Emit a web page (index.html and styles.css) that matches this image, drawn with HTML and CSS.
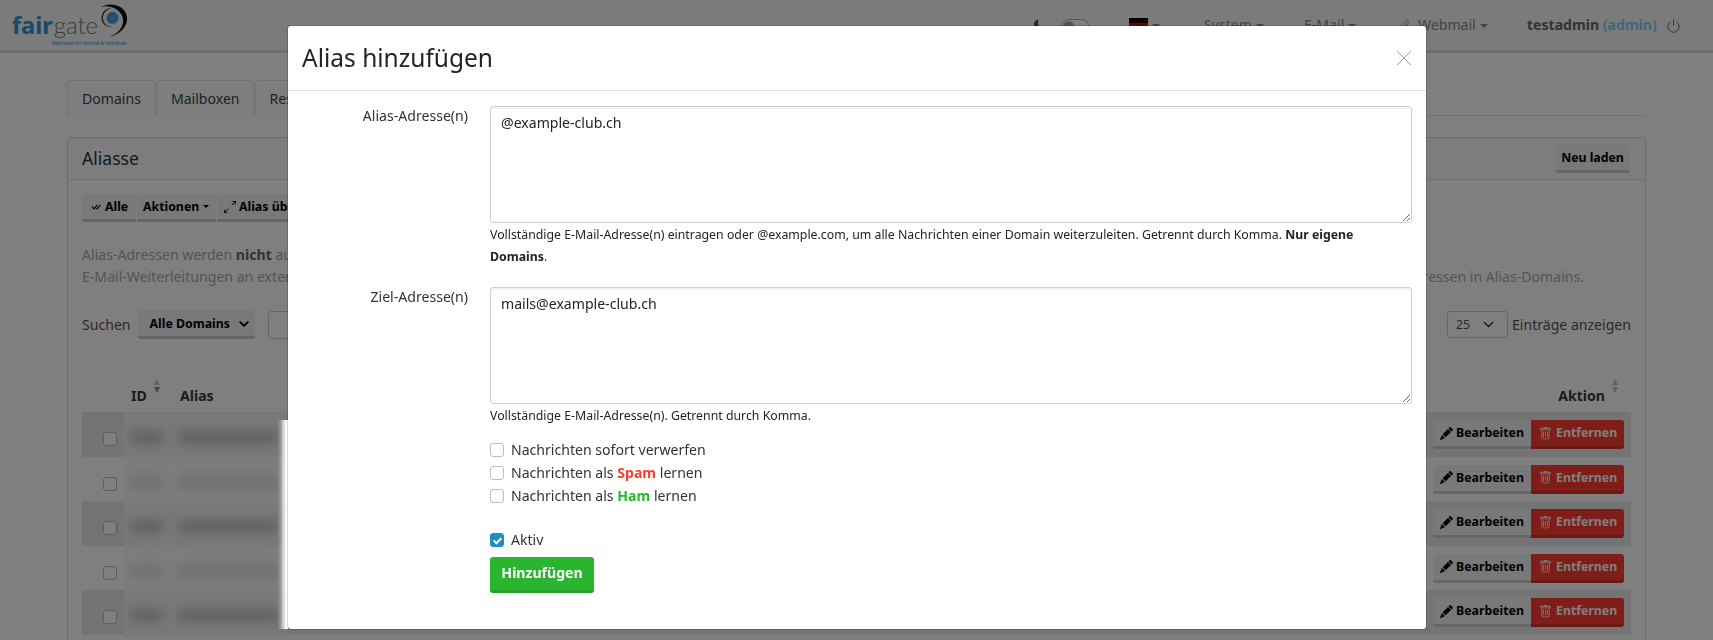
FILE: index.html
```html
<!DOCTYPE html>
<html lang="de">
<head>
<meta charset="utf-8">
<title>Aliasse</title>
<link rel="stylesheet" href="styles.css">
</head>
<body>
<svg class="defs" aria-hidden="true">
  <symbol id="i-pencil" viewBox="0 0 16 16"><path d="M12.854.146a.5.5 0 0 0-.707 0L10.5 1.793 14.207 5.5l1.647-1.646a.5.5 0 0 0 0-.708l-3-3zm.646 6.061L9.793 2.5 3.293 9H3.5a.5.5 0 0 1 .5.5v.5h.5a.5.5 0 0 1 .5.5v.5h.5a.5.5 0 0 1 .5.5v.5h.5a.5.5 0 0 1 .5.5v.207l6.5-6.5zm-7.468 7.468A.5.5 0 0 1 6 13.5V13h-.5a.5.5 0 0 1-.5-.5V12h-.5a.5.5 0 0 1-.5-.5V11h-.5a.5.5 0 0 1-.5-.5V10h-.5a.499.499 0 0 1-.175-.032l-.179.178a.5.5 0 0 0-.11.168l-2 5a.5.5 0 0 0 .65.65l5-2a.5.5 0 0 0 .168-.11l.178-.178z"/></symbol>
  <symbol id="i-trash" viewBox="0 0 16 16"><path d="M5.5 5.5A.5.5 0 0 1 6 6v6a.5.5 0 0 1-1 0V6a.5.5 0 0 1 .5-.5zm2.5 0a.5.5 0 0 1 .5.5v6a.5.5 0 0 1-1 0V6a.5.5 0 0 1 .5-.5zm3 .5a.5.5 0 0 0-1 0v6a.5.5 0 0 0 1 0V6z"/><path fill-rule="evenodd" d="M14.5 3a1 1 0 0 1-1 1H13v9a2 2 0 0 1-2 2H5a2 2 0 0 1-2-2V4h-.5a1 1 0 0 1-1-1V2a1 1 0 0 1 1-1H6a1 1 0 0 1 1-1h2a1 1 0 0 1 1 1h3.5a1 1 0 0 1 1 1v1zM4.118 4 4 4.059V13a1 1 0 0 0 1 1h6a1 1 0 0 0 1-1V4.059L11.882 4H4.118zM2.5 3V2h11v1h-11z"/></symbol>
  <symbol id="i-chev" viewBox="0 0 16 16"><path fill="none" stroke="currentColor" stroke-linecap="round" stroke-linejoin="round" d="M2 5l6 6 6-6"/></symbol>
</svg>

<div class="page">
  <header class="nav">
    <div class="logo">
      <div class="logo-word"><span class="logo-fair">fair</span><span class="logo-gate">gate</span></div>
      <div class="logo-tag">Mehrwert für Vereine &amp; Verbände</div>
      <svg class="logo-swirl" viewBox="0 0 34 34">
        <defs><radialGradient id="orb"><stop offset="0" stop-color="#5fb4ea"/><stop offset="0.7" stop-color="#3a90d2"/><stop offset="1" stop-color="#b6d8ee"/></radialGradient></defs>
        <circle cx="16.500" cy="14" r="9" fill="#f2f6f8"/>
        <circle cx="16.500" cy="14" r="6.500" fill="url(#orb)"/>
        <path d="M5.500 15C5 8 10 3.500 17 4 11.500 4.500 7 8.500 7 14c0 5 4 8.500 9.500 8.800C10.500 23.500 6 20 5.500 15z" fill="#444"/>
        <path d="M5 3C13-2 29 0 31 13c1 10-8 18-18 20 9-3 15-10 14-18C26 6 14 0 5 3z" fill="#111"/>
      </svg>
    </div>
    <div class="nav-right">
      <svg class="moon" viewBox="0 0 16 16"><path d="M6 .3a7.2 7.2 0 0 0 2 14.9c2.500 0 4.700-1.300 6-3.200-4.500.7-8.700-2.500-8.700-7 0-1.800.3-3.400.7-4.700z"/></svg>
      <span class="toggle"><span class="toggle-knob"></span></span>
      <span class="flag"><span class="fl-b"></span><span class="fl-r"></span><span class="fl-y"></span></span>
      <span class="caret caret-flag"></span>
      <span class="nav-item nav-system">System<span class="caret"></span></span>
      <span class="nav-item nav-email">E-Mail<span class="caret"></span></span>
      <svg class="clip" viewBox="0 0 16 16"><path d="M13 6l-6.500 6.500a2.300 2.300 0 0 1-3.300-3.300L10 2.500a1.600 1.600 0 0 1 2.300 2.200L6 11" fill="none" stroke="currentColor" stroke-width="1"/></svg>
      <span class="nav-item nav-webmail">Webmail<span class="caret"></span></span>
      <span class="nav-user">testadmin <span class="nav-role">(admin)</span></span>
      <svg class="power" viewBox="0 0 16 16"><path d="M5 3.500a6 6 0 1 0 6 0M8 1v7" fill="none" stroke="currentColor" stroke-width="1"/></svg>
    </div>
  </header>

  <main class="content">
    <nav class="tabs">
      <span class="tab">Domains</span>
      <span class="tab">Mailboxen</span>
      <span class="tab">Ressourcen</span>
    </nav>
    <section class="panel">
      <div class="panel-head">
        <h2 class="panel-title">Aliasse</h2>
        <button class="btn btn-reload">Neu laden</button>
      </div>
      <div class="panel-body">
        <div class="btn-group">
          <button class="btn btn-joined btn-all"><svg class="ic-12" viewBox="0 0 16 16"><path d="M8.970 4.970a.75.75 0 0 1 1.070 1.050l-3.990 4.990a.75.75 0 0 1-1.080.020L2.324 8.384a.75.75 0 1 1 1.060-1.060l2.094 2.093L8.950 4.992a.252.252 0 0 1 .020-.022zm-.92 5.140.92.920a.75.75 0 0 0 1.079-.020l3.992-4.990a.75.75 0 1 0-1.091-1.028L9.477 9.417l-.485-.486-.943 1.179z"/></svg> Alle</button>
          <button class="btn btn-joined btn-actions">Aktionen<span class="caret caret-dark"></span></button>
          <button class="btn btn-joined btn-take"><svg class="ic-12" viewBox="0 0 16 16"><path d="M5.828 10.172a.5.5 0 0 0-.707 0l-4.096 4.096V11.500a.5.5 0 0 0-1 0v3.975a.5.5 0 0 0 .5.5H4.500a.5.5 0 0 0 0-1H1.732l4.096-4.096a.5.5 0 0 0 0-.707zm4.344-4.344a.5.5 0 0 0 .707 0l4.096-4.096V4.500a.5.5 0 1 0 1 0V.525a.5.5 0 0 0-.5-.5H11.500a.5.5 0 0 0 0 1h2.768l-4.096 4.096a.5.5 0 0 0 0 .707z"/></svg> Alias übernehmen</button>
        </div>
        <div class="note">
          <p class="note-line"><span>Alias-Adressen werden <b>nicht</b> automatisch angelegt</span></p>
          <p class="note-line"><span>E-Mail-Weiterleitungen an externe Adressen</span><span>Adressen in Alias-Domains.</span></p>
        </div>
        <div class="filters">
          <div class="filters-left">
            <span>Suchen</span>
            <span class="select-btn">Alle Domains<svg class="chev" viewBox="0 0 16 16"><use href="#i-chev"/></svg></span>
            <span class="search-box"></span>
          </div>
          <div class="filters-right">
            <span class="select-plain">25<svg class="chev" viewBox="0 0 16 16"><use href="#i-chev"/></svg></span>
            <span>Einträge anzeigen</span>
          </div>
        </div>
        <div class="thead">
          <span class="th th-id">ID<span class="sort"><i class="up"></i><i class="down"></i></span></span>
          <span class="th th-alias">Alias</span>
          <span class="th th-action">Aktion<span class="sort sort-faint"><i class="up"></i><i class="down"></i></span></span>
        </div>
        <div class="rows">
          <div class="row row-odd"><input class="cb" type="checkbox"><div class="row-actions"><button class="btn btn-edit"><svg class="ic-13"><use href="#i-pencil"/></svg>Bearbeiten</button><button class="btn btn-del"><svg class="ic-13"><use href="#i-trash"/></svg>Entfernen</button></div></div>
          <div class="row"><input class="cb" type="checkbox"><div class="row-actions"><button class="btn btn-edit"><svg class="ic-13"><use href="#i-pencil"/></svg>Bearbeiten</button><button class="btn btn-del"><svg class="ic-13"><use href="#i-trash"/></svg>Entfernen</button></div></div>
          <div class="row row-odd"><input class="cb" type="checkbox"><div class="row-actions"><button class="btn btn-edit"><svg class="ic-13"><use href="#i-pencil"/></svg>Bearbeiten</button><button class="btn btn-del"><svg class="ic-13"><use href="#i-trash"/></svg>Entfernen</button></div></div>
          <div class="row"><input class="cb" type="checkbox"><div class="row-actions"><button class="btn btn-edit"><svg class="ic-13"><use href="#i-pencil"/></svg>Bearbeiten</button><button class="btn btn-del"><svg class="ic-13"><use href="#i-trash"/></svg>Entfernen</button></div></div>
          <div class="row row-odd"><input class="cb" type="checkbox"><div class="row-actions"><button class="btn btn-edit"><svg class="ic-13"><use href="#i-pencil"/></svg>Bearbeiten</button><button class="btn btn-del"><svg class="ic-13"><use href="#i-trash"/></svg>Entfernen</button></div></div>
        </div>
      </div>
    </section>
  </main>
</div>

<div class="backdrop"></div>

<div class="redact" aria-hidden="true">
  <div class="r-row r-dark"><i class="r-id"></i><i class="r-alias"></i></div>
  <div class="r-row"><i class="r-id"></i><i class="r-alias"></i></div>
  <div class="r-row r-dark"><i class="r-id"></i><i class="r-alias"></i></div>
  <div class="r-row"><i class="r-id"></i><i class="r-alias"></i></div>
  <div class="r-row r-dark"><i class="r-id"></i><i class="r-alias"></i></div>
</div>

<div class="modal">
  <div class="modal-head">
    <h1 class="modal-title">Alias hinzufügen</h1>
    <svg class="modal-close" viewBox="0 0 16 16"><path d="M1 1l14 14M15 1L1 15" stroke="currentColor" stroke-width="1" fill="none"/></svg>
  </div>
  <form class="modal-body">
    <div class="field">
      <label class="field-label">Alias-Adresse(n)</label>
      <div>
        <textarea class="area">@example-club.ch</textarea>
        <p class="help">Vollständige E-Mail-Adresse(n) eintragen oder @example.com, um alle Nachrichten einer Domain weiterzuleiten. Getrennt durch Komma. <b>Nur eigene</b> <b>Domains</b>.</p>
      </div>
    </div>
    <div class="field field-second">
      <label class="field-label">Ziel-Adresse(n)</label>
      <div>
        <textarea class="area">mails@example-club.ch</textarea>
        <p class="help">Vollständige E-Mail-Adresse(n). Getrennt durch Komma.</p>
      </div>
    </div>
    <div class="field">
      <span></span>
      <div>
        <div class="checks">
          <label class="check"><input class="cb" type="checkbox">Nachrichten sofort verwerfen</label>
          <label class="check"><input class="cb" type="checkbox">Nachrichten als&nbsp;<b class="spam">Spam</b>&nbsp;lernen</label>
          <label class="check"><input class="cb" type="checkbox">Nachrichten als&nbsp;<b class="ham">Ham</b>&nbsp;lernen</label>
        </div>
        <label class="check check-active"><input class="cb" type="checkbox" checked>Aktiv</label>
        <button class="btn-add" type="button">Hinzufügen</button>
      </div>
    </div>
  </form>
</div>
</body>
</html>
```
FILE: styles.css
```css
* { box-sizing: border-box; }
html, body { margin: 0; height: 640px; overflow: hidden; }
body { font-family: "Noto Sans", sans-serif; font-size: 14.080px; line-height: 22px; color: #212529; background: #fff; }
p, h1, h2 { margin: 0; font-weight: 400; }
.defs { position: absolute; width: 0; height: 0; }
.page { height: 640px; overflow: hidden; }

/* top bar */
.nav { height: 53px; background: #f6f6f6; border-bottom: 3px solid #dcdcdc; display: flex; justify-content: space-between; }
.logo { position: relative; width: 140px; padding: 11px 0 0 12px; }
.logo-word { font-size: 24px; line-height: 28px; font-family: "Lato", sans-serif; white-space: nowrap; }
.logo-fair { font-family: "Noto Sans", sans-serif; font-weight: 700; color: #2a98d0; font-size: 23.500px; }
.logo-gate { color: #777; font-weight: 300; margin-left: 1px; }
.logo-tag { position: absolute; left: 52px; top: 40px; font-size: 4.700px; line-height: 6px; color: #2a98d0; white-space: nowrap; }
.logo-swirl { position: absolute; left: 96px; top: 4px; width: 34px; height: 34px; }
.nav-right { position: relative; flex: 1; display: flex; align-items: center; color: #888; }
.moon { position: absolute; left: 894px; top: 17px; width: 12px; height: 16px; fill: #555; }
.toggle { position: absolute; left: 921px; top: 19px; width: 28px; height: 15px; border: 1px solid #aaa; border-radius: 8px; background: #fff; }
.toggle-knob { display: block; width: 11px; height: 11px; margin: 1px; border-radius: 50%; background: #aaa; }
.flag { position: absolute; left: 989px; top: 18px; width: 19px; height: 15px; display: flex; flex-direction: column; }
.flag span { flex: 1; }
.fl-b { background: #000; } .fl-r { background: #d00; } .fl-y { background: #fc0; }
.caret { display: inline-block; width: 0; height: 0; margin-left: 4px; vertical-align: 2px; border: 4px solid transparent; border-top-color: currentColor; border-bottom-width: 0; }
.caret-flag { position: absolute; left: 1012px; top: 24px; margin: 0; }
.caret-dark { border-width: 3px 3px 0; vertical-align: 2px; }
.nav-item, .nav-user { position: absolute; top: 14px; white-space: nowrap; }
.nav-system { left: 1064px; }
.nav-email { left: 1164px; }
.clip { position: absolute; left: 1258px; top: 17px; width: 13px; height: 16px; }
.nav-webmail { left: 1278px; }
.nav-user { left: 1387px; font-weight: 700; color: #666; }
.nav-role { color: #7fd0ee; font-weight: 700; }
.power { position: absolute; left: 1526px; top: 18px; width: 15px; height: 16px; color: #666; }

/* page */
.content { padding: 27px 67px 0; }
.tabs { display: flex; gap: 1px; height: 36px; border-bottom: 1px solid #e3e3e3; }
.tab { height: 36px; padding: 7px 13px 0 14px; border: 1px solid #e3e3e3; border-bottom: 0; border-radius: 3px 3px 0 0; color: #444; background: #fdfdfd; }
.panel { margin-top: 21px; border: 1px solid #d8d8d8; border-radius: 3px; background: #fff; height: 560px; }
.panel-head { height: 42px; padding: 7px 15px 0 14px; display: flex; justify-content: space-between; border-bottom: 1px solid #e0e0e0; background: #fbfbfb; }
.panel-title { font-size: 17.600px; line-height: 27px; color: #333; }
.panel-body { padding: 14px 14px 0; }
.btn { font-family: inherit; font-size: 12.320px; font-weight: 700; line-height: 16px; color: #000; background: #f2f2f2; border: 0; border-bottom: 3px solid #ccc; border-radius: 3px; padding: 0 7px; height: 28px; display: inline-flex; align-items: center; white-space: nowrap; }
.btn-reload { height: 28px; width: 75px; justify-content: center; }
.btn-group { display: flex; gap: 1px; }
.btn-joined { border-radius: 0; gap: 3px; }
.btn-all { width: 54px; padding: 0 0 0 8px; border-radius: 3px 0 0 3px; }
.btn-actions { width: 79px; padding: 0 0 0 6px; gap: 0; }
.btn-take { width: 160px; padding: 0 0 0 7px; }
.ic-12 { width: 12px; height: 12px; flex: none; }
.note { margin-top: 22px; color: #a8a8a8; }
.note b { color: #666; }
.note-line { display: flex; justify-content: space-between; width: 1502px; }
.filters { margin-top: 22px; height: 29px; display: flex; justify-content: space-between; align-items: center; color: #555; }
.filters-left, .filters-right { display: flex; align-items: center; }
.select-btn { margin-left: 7px; width: 117px; height: 29px; padding: 1px 6px 0 12px; background: #f2f2f2; border-bottom: 3px solid #ccc; border-radius: 3px; font-size: 12.320px; font-weight: 700; color: #000; display: flex; align-items: center; justify-content: space-between; }
.search-box { margin-left: 13px; width: 200px; height: 28px; border: 1px solid #ccc; border-radius: 3px; }
.select-plain { width: 61px; height: 27px; margin-right: 4px; padding: 0 13px 0 8px; border: 1px solid #ccc; border-radius: 3px; display: flex; align-items: center; justify-content: space-between; font-size: 12.320px; }
.chev { width: 10px; height: 10px; color: #000; stroke-width: 3; }
.select-plain .chev { width: 11px; height: 11px; color: #333; stroke-width: 2; }
.thead { position: relative; height: 73px; font-weight: 700; color: #383838; }
.th { position: absolute; top: 46px; display: inline-flex; }
.th-id { left: 49px; }
.th-alias { left: 98px; }
.th-action { right: 26px; }
.sort { position: absolute; left: calc(100% + 7px); top: -6px; display: flex; flex-direction: column; gap: 2px; }
.th-action .sort { left: calc(100% + 7px); }
.sort i { display: block; width: 0; height: 0; border-left: 3.500px solid transparent; border-right: 3.500px solid transparent; }
.sort .up { border-bottom: 6px solid #c4c4c4; }
.sort .down { border-top: 6px solid #888; }
.sort-faint .down { border-top-color: #c4c4c4; }
.row { height: 44.500px; display: flex; justify-content: space-between; padding: 8px 7px 0 21px; }
.row-odd { background: #e9e9e9; }
.row .cb { margin-top: 12px; }
.row-actions { display: flex; }
.btn-edit, .btn-del { height: 29px; padding: 0 8px; gap: 4px; }
.btn-edit { width: 98px; padding-left: 7px; gap: 3px; border-radius: 3px 0 0 3px; background: #f3f3f3; }
.btn-del { width: 93px; border-radius: 0 3px 3px 0; background: #ff3b30; border-bottom-color: #d8322a; color: #fff; }
.btn-edit svg { fill: #000; }
.btn-del svg { fill: #fff; }
.ic-13 { width: 13px; height: 13px; flex: none; }

/* overlay layers */
.backdrop { position: fixed; inset: 0; background: rgba(0, 0, 0, .5); }
.redact { position: absolute; left: 124px; top: 413px; width: 164px; height: 227px; background: #7e7e7e; overflow: hidden; }
.redact::after { content: ""; position: absolute; right: 0; top: 7px; bottom: 11px; width: 11px; background: linear-gradient(90deg, rgba(255,255,255,0), rgba(255,255,255,.2) 30%, rgba(255,255,255,.7) 60%, #fff 85%); }
.r-row { position: relative; height: 44.500px; background: #7d7d7d; filter: blur(2px); }
.r-row i { position: absolute; top: 18px; height: 13px; background: #707070; filter: blur(5px); }
.r-dark { background: #797979; }
.r-dark i { background: #626262; }
.r-id { left: 7px; width: 32px; }
.r-alias { left: 54px; width: 100px; }

/* modal */
.modal { position: fixed; left: 288px; top: 26px; width: 1138px; height: 603px; background: #fff; border-radius: 3px; box-shadow: 0 0 0 1px rgba(0,0,0,.15); }
.modal-head { height: 65px; padding: 0 14px; display: flex; justify-content: space-between; align-items: center; border-bottom: 1px solid #e2e3e7; }
.modal-title { font-size: 24.500px; line-height: 32px; color: #212529; }
.modal-close { width: 16px; height: 16px; color: #9a9a9a; }
.modal-body { padding: 15px 14px 0; }
.field { display: grid; grid-template-columns: 188px 1fr; }
.field-second { margin-top: 19px; }
.field-label { padding: 0 22px 0 0; text-align: right; line-height: 20px; color: #333; }
.area { display: block; width: 100%; height: 117px; padding: 5px 10px; border: 1px solid #ced0d6; border-radius: 3px; box-shadow: inset 0 2px 1px rgba(0,0,0,.06); font: inherit; color: #212529; outline: 0; }
.help { font-size: 12.320px; line-height: 22px; margin-top: 1px; color: #212529; }
.checks { margin-top: 11px; }
.check { display: flex; align-items: center; height: 23px; color: #333; }
.check .cb { margin: 0 7px 0 0; }
.check-active { margin-top: 21px; }
.cb { appearance: none; width: 14px; height: 14px; margin: 0; flex: none; border: 1px solid #bdbdbd; border-radius: 3px; background: #fff; position: relative; }
.cb:checked { background: #1b8fc4; border-color: #1b8fc4; }
.cb:checked::after { content: ""; position: absolute; left: 4px; top: 2px; width: 3px; height: 6px; border: solid #fff; border-width: 0 2px 2px 0; transform: rotate(45deg); }
.spam { color: #ff3b30; }
.ham { color: #2ab52e; }
.btn-add { display: block; margin-top: 6px; width: 104px; height: 36px; padding: 0 0 3px; border: 0; border-bottom: 3px solid #25a229; border-radius: 3px; background: #2ab52e; color: #fff; font: 700 14.080px "Noto Sans", sans-serif; }
```
